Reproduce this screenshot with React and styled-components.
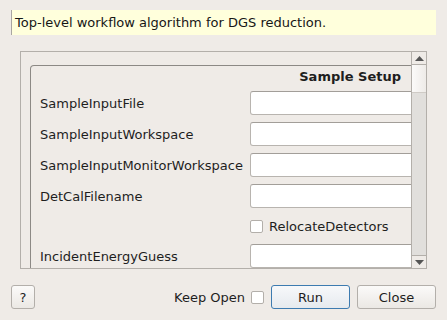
import React from "react"
import styled, { createGlobalStyle } from "styled-components"

const GlobalStyle = createGlobalStyle`
  html, body {
    margin: 0;
    padding: 0;
    background: #efebe7;
  }
  body {
    font-family: "DejaVu Sans", "Liberation Sans", sans-serif;
    font-size: 13px;
    color: #1e1e1e;
  }
`

const fields = [
  { name: "SampleInputFile", kind: "text" },
  { name: "SampleInputWorkspace", kind: "text" },
  { name: "SampleInputMonitorWorkspace", kind: "text" },
  { name: "DetCalFilename", kind: "text" },
  { name: "RelocateDetectors", kind: "check" },
  { name: "IncidentEnergyGuess", kind: "text" },
]

const App = () => (
  <Dialog>
    <GlobalStyle />
    <Description>Top-level workflow algorithm for DGS reduction.</Description>
    <ScrollFrame>
      <Viewport>
        <Group>
          <GroupTitle>Sample Setup</GroupTitle>
          <Form>
            {fields.map((f) =>
              f.kind === "check" ? (
                <CheckRow key={f.name}>
                  <span />
                  <CheckLabel>
                    <Box />
                    {f.name}
                  </CheckLabel>
                </CheckRow>
              ) : (
                <Row key={f.name}>
                  <Label>{f.name}</Label>
                  <Input />
                </Row>
              )
            )}
          </Form>
        </Group>
      </Viewport>
      <ScrollBar>
        <Arrow>
          <svg width="9" height="5" viewBox="0 0 9 5">
            <path d="M0 5 L4.5 0 L9 5 Z" fill="#555" />
          </svg>
        </Arrow>
        <Handle />
        <Track />
        <Arrow bottom>
          <svg width="9" height="5" viewBox="0 0 9 5">
            <path d="M0 0 L4.5 5 L9 0 Z" fill="#555" />
          </svg>
        </Arrow>
      </ScrollBar>
    </ScrollFrame>
    <Footer>
      <Button width={24}>?</Button>
      <Spacer />
      <KeepOpen>Keep Open</KeepOpen>
      <Box />
      <Button width={79} primary>
        Run
      </Button>
      <Button width={79}>Close</Button>
    </Footer>
  </Dialog>
)

export default App

const Dialog = styled.div`
  width: 447px;
  height: 320px;
  box-sizing: border-box;
  padding: 10px 11px 0 11px;
  display: flex;
  flex-direction: column;
`

const Description = styled.div`
  height: 25px;
  box-sizing: border-box;
  background: #ffffdc;
  border-left: 1px solid #a9a6a2;
  padding-left: 3px;
  display: flex;
  align-items: center;
  color: #161616;
`

const ScrollFrame = styled.div`
  margin: 16px 0 0 9px;
  width: 407px;
  height: 218px;
  box-sizing: border-box;
  border: 1px solid #b3afaa;
  display: flex;
`

const Viewport = styled.div`
  flex: 1;
  overflow: hidden;
  padding: 13px 0 0 9px;
`

const Group = styled.div`
  width: 392px;
  border: 1px solid #8c8985;
  border-bottom: none;
  border-radius: 4px 4px 0 0;
  box-sizing: border-box;
  padding: 0 0 0 9px;
`

const GroupTitle = styled.div`
  font-weight: bold;
  text-align: right;
  height: 24px;
  line-height: 22px;
  padding-right: 20px;
`

const Form = styled.div`
  display: flex;
  flex-direction: column;
  gap: 7px;
  padding-top: 1px;
`

const Row = styled.div`
  display: grid;
  grid-template-columns: 210px 1fr;
  align-items: center;
  height: 24px;
`

const CheckRow = styled(Row)`
  height: 22px;
`

const Label = styled.span`
  white-space: nowrap;
`

const Input = styled.div`
  height: 24px;
  box-sizing: border-box;
  background: #fff;
  border: 1px solid #b8b4af;
  border-top-color: #a29e99;
  border-radius: 3px;
  margin-right: 4px;
`

const CheckLabel = styled.span`
  display: flex;
  align-items: center;
  gap: 6px;
`

const Box = styled.span`
  display: inline-block;
  width: 13px;
  height: 13px;
  box-sizing: border-box;
  background: #fff;
  border: 1px solid #b3afaa;
  border-radius: 2px;
`

const ScrollBar = styled.div`
  width: 14px;
  border-left: 1px solid #b3afaa;
  display: flex;
  flex-direction: column;
`

const Arrow = styled.div`
  height: 13px;
  box-sizing: border-box;
  display: flex;
  align-items: center;
  justify-content: center;
  background: #efebe7;
  border-${(p) => (p.bottom ? "top" : "bottom")}: 1px solid #b3afaa;
`

const Handle = styled.div`
  height: 28px;
  box-sizing: border-box;
  background: linear-gradient(to right, #fbfaf9, #eeebe8);
  border-bottom: 1px solid #cfcbc6;
`

const Track = styled.div`
  flex: 1;
  background: #e1dfdc;
`

const Footer = styled.div`
  margin-top: 16px;
  display: flex;
  align-items: center;
  height: 24px;
`

const Spacer = styled.div`
  flex: 1;
`

const KeepOpen = styled.span`
  margin-right: 6px;
`

const Button = styled.button`
  width: ${(p) => p.width}px;
  height: 24px;
  margin-left: ${(p) => (p.width > 30 ? 7 : 0)}px;
  box-sizing: border-box;
  font: inherit;
  color: #1e1e1e;
  border-radius: 3px;
  border: 1px solid ${(p) => (p.primary ? "#3d7bb0" : "#b3afaa")};
  background: ${(p) =>
    p.primary
      ? "linear-gradient(#f7f8fa, #e6eaee)"
      : "linear-gradient(#fbfaf9, #ebe8e4)"};
  padding: 0;
  display: flex;
  align-items: center;
  justify-content: center;
`
